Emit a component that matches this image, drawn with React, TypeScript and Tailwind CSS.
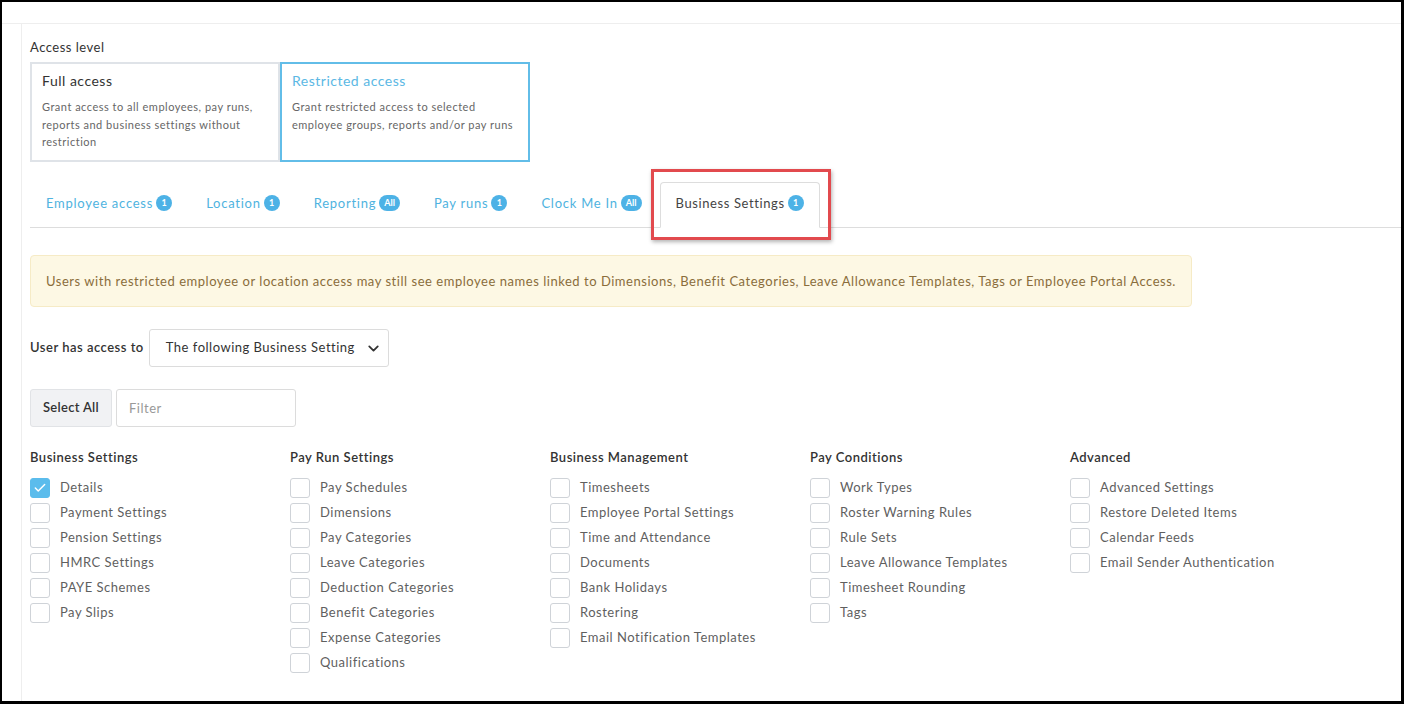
import { ChevronDown, Check } from "lucide-react"

const font = { fontFamily: "Lato, 'Open Sans', sans-serif", letterSpacing: "0.5px" }

const tabs = [
  { label: "Employee access", badge: "1" },
  { label: "Location", badge: "1" },
  { label: "Reporting", badge: "All" },
  { label: "Pay runs", badge: "1" },
  { label: "Clock Me In", badge: "All" },
]

const columns = [
  {
    title: "Business Settings",
    items: ["Details", "Payment Settings", "Pension Settings", "HMRC Settings", "PAYE Schemes", "Pay Slips"],
  },
  {
    title: "Pay Run Settings",
    items: [
      "Pay Schedules",
      "Dimensions",
      "Pay Categories",
      "Leave Categories",
      "Deduction Categories",
      "Benefit Categories",
      "Expense Categories",
      "Qualifications",
    ],
  },
  {
    title: "Business Management",
    items: [
      "Timesheets",
      "Employee Portal Settings",
      "Time and Attendance",
      "Documents",
      "Bank Holidays",
      "Rostering",
      "Email Notification Templates",
    ],
  },
  {
    title: "Pay Conditions",
    items: ["Work Types", "Roster Warning Rules", "Rule Sets", "Leave Allowance Templates", "Timesheet Rounding", "Tags"],
  },
  {
    title: "Advanced",
    items: ["Advanced Settings", "Restore Deleted Items", "Calendar Feeds", "Email Sender Authentication"],
  },
]

function Badge({ value }: { value: string }) {
  return (
    <span
      className={`ml-[3px] inline-flex h-[16px] items-center justify-center rounded-full bg-[#4db2e6] text-[9px] font-bold tracking-normal text-white ${
        value.length > 1 ? "px-[5px]" : "w-[16px]"
      }`}
    >
      {value}
    </span>
  )
}

function CheckRow({ label, checked }: { label: string; checked?: boolean }) {
  return (
    <label className="flex h-[20px] items-center gap-[10px]">
      <span
        className={`flex h-[20px] w-[20px] items-center justify-center rounded-[3px] border ${
          checked ? "border-[#5bbcec] bg-[#5bbcec]" : "border-[#cfd3d8] bg-white"
        }`}
      >
        {checked && <Check size={14} strokeWidth={2.5} className="text-white" />}
      </span>
      <span className="text-[13px] text-[#5f5f5f]">{label}</span>
    </label>
  )
}

export default function App() {
  return (
    <div className="h-[704px] w-[1404px] bg-black pt-[2px] pb-[3px] pl-[2px] pr-[3px]" style={font}>
      <div className="flex h-full flex-col bg-white pt-[21px]">
        <div className="flex flex-1 border-t border-[#eeeeee]">
          <div className="ml-[19px] flex-1 border-l border-[#eeeeee] pl-[8px] pt-[13px]">
            {/* Access level */}
            <div className="text-[13px] leading-[20px] text-[#333]">Access level</div>
            <div className="mt-[5px] flex">
              <div className="h-[100px] w-[250px] border-2 border-[#dfe3e8] px-[10px] pt-[7px]">
                <div className="text-[14px] leading-[20px] text-[#333]">Full access</div>
                <p className="mt-[7px] text-[11px] leading-[17.5px] text-[#666]">
                  Grant access to all employees, pay runs, reports and business settings without restriction
                </p>
              </div>
              <div className="h-[100px] w-[250px] border-2 border-[#62bde8] px-[10px] pt-[7px]">
                <div className="text-[14px] leading-[20px] text-[#5bb8e4]">Restricted access</div>
                <p className="mt-[7px] text-[11px] leading-[17.5px] text-[#666]">
                  Grant restricted access to selected employee groups, reports and/or pay runs
                </p>
              </div>
            </div>

            {/* Tabs */}
            <div className="mt-[20px] flex border-b border-[#dddddd] tracking-[0.75px]">
              {tabs.map((t) => (
                <div
                  key={t.label}
                  className="-mb-px mr-[2px] flex items-center border border-transparent px-[15px] pt-[11px] pb-[15px] text-[13px] leading-[18px] text-[#4fb3e0]"
                >
                  {t.label}
                  <Badge value={t.badge} />
                </div>
              ))}
              <div className="relative -mb-px mr-[2px] flex items-center rounded-t-[4px] border border-[#dddddd] border-b-white bg-white px-[15px] pt-[11px] pb-[15px] text-[13px] leading-[18px] tracking-[0.6px] text-[#444]">
                Business Settings
                <Badge value="1" />
                <span className="pointer-events-none absolute -top-[14px] -right-[12px] -bottom-[13px] -left-[10px] border-[3px] border-[#e24a4e] shadow-[1px_2px_4px_rgba(0,0,0,0.3)]" />
              </div>
            </div>

            {/* Notice */}
            <div className="mt-[27px] w-fit rounded-[4px] border border-[#f6ebc6] bg-[#fdf8e4] p-[15px] text-[13px] leading-[20px] tracking-[0.53px] text-[#8a6d3b]">
              Users with restricted employee or location access may still see employee names linked to Dimensions,
              Benefit Categories, Leave Allowance Templates, Tags or Employee Portal Access.
            </div>

            {/* Access selector */}
            <div className="mt-[22px] flex items-center gap-[5px]">
              <span className="text-[13px] font-semibold text-[#333]">User has access to</span>
              <div className="flex h-[38px] w-[240px] items-center justify-between rounded-[3px] border border-[#dcdcdc] pl-[16px] pr-[6px] text-[13px] text-[#333]">
                The following Business Setting
                <ChevronDown size={17} strokeWidth={2.5} />
              </div>
            </div>

            <div className="mt-[22px] flex gap-[4px]">
              <button className="h-[38px] w-[82px] rounded-[3px] border border-[#e1e3e6] bg-[#f1f2f4] text-[13px] font-semibold tracking-[0.3px] text-[#333]">
                Select All
              </button>
              <input
                placeholder="Filter"
                className="h-[38px] w-[180px] rounded-[3px] border border-[#dcdcdc] px-[12px] text-[13px] text-[#333] placeholder:text-[#999]"
              />
            </div>

            {/* Permission columns */}
            <div className="mt-[21px] flex">
              {columns.map((col, ci) => (
                <div key={col.title} className="w-[260px]">
                  <div className="text-[13px] font-semibold leading-[18px] text-[#333]">{col.title}</div>
                  <div className="mt-[12px] flex flex-col gap-[5px]">
                    {col.items.map((item, ii) => (
                      <CheckRow key={item} label={item} checked={ci === 0 && ii === 0} />
                    ))}
                  </div>
                </div>
              ))}
            </div>
          </div>
        </div>
      </div>
    </div>
  )
}
